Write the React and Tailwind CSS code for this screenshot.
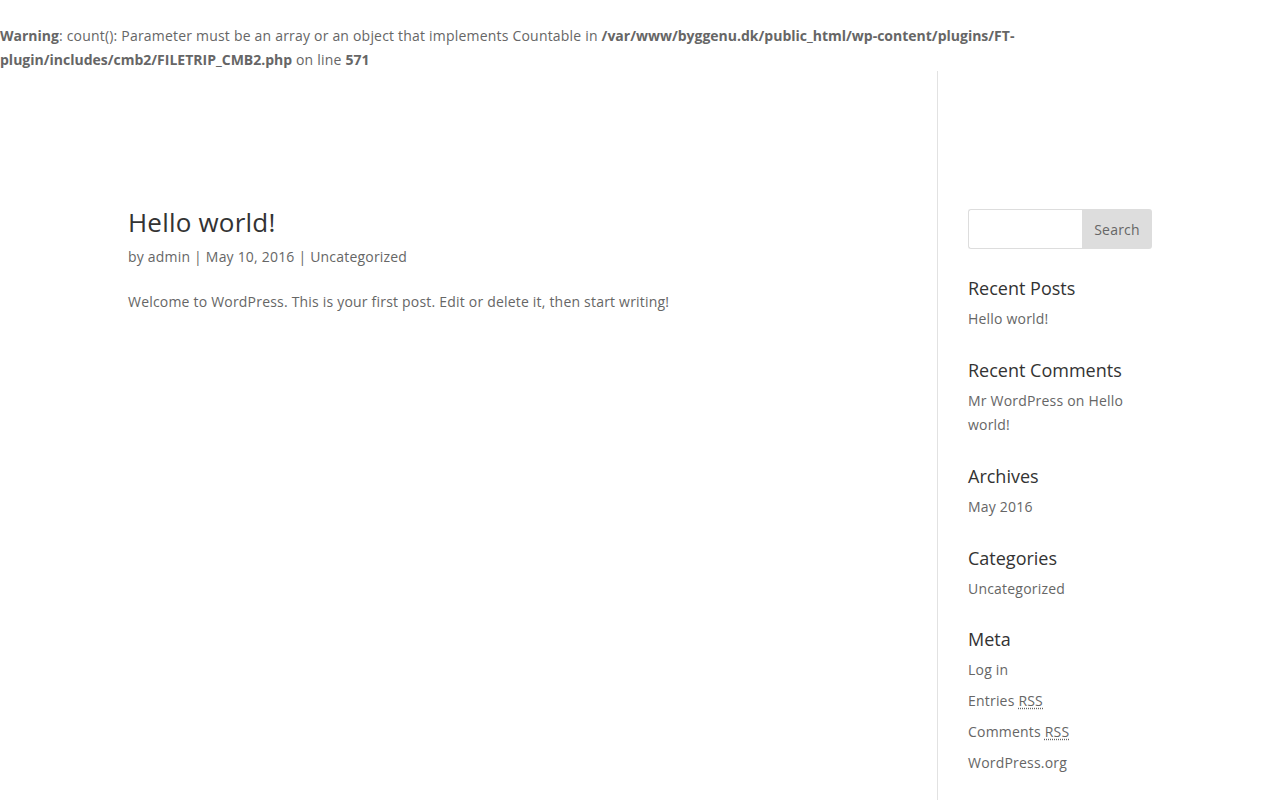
const font = { fontFamily: '"Open Sans", "Liberation Sans", sans-serif' };

const widgets = [
  { title: "Recent Posts", items: [<a key="1">Hello world!</a>] },
  {
    title: "Recent Comments",
    items: [
      <span key="1">
        <a>Mr WordPress</a> on <a>Hello world!</a>
      </span>,
    ],
  },
  { title: "Archives", items: [<a key="1">May 2016</a>] },
  { title: "Categories", items: [<a key="1">Uncategorized</a>] },
  {
    title: "Meta",
    items: [
      <a key="1">Log in</a>,
      <a key="2">
        Entries <abbr title="Really Simple Syndication">RSS</abbr>
      </a>,
      <a key="3">
        Comments <abbr title="Really Simple Syndication">RSS</abbr>
      </a>,
      <a key="4">WordPress.org</a>,
    ],
  },
];

const Sidebar = () => (
  <div className="w-[215px] shrink-0 border-l border-[#e2e2e2] pl-[30px] pt-[138px]">
    <div className="flex h-[40px] w-[184px]">
      <input
        type="text"
        className="h-[40px] w-[114px] rounded-l-[3px] border border-r-0 border-[#dddddd] bg-white px-2 outline-none"
      />
      <button className="h-[40px] w-[70px] rounded-r-[3px] bg-[#dddddd] text-[14px] tracking-[0.2px] text-[#666666]">
        Search
      </button>
    </div>
    {widgets.map((w) => (
      <div key={w.title} className={w.title === "Meta" ? "mt-[26px]" : "mt-[27px]"}>
        <h4 className="pb-[7px] text-[18px] leading-[24px] text-[#333333]">{w.title}</h4>
        <ul>
          {w.items.map((item, j) => (
            <li
              key={j}
              className="mb-[7px] text-[14px] leading-[24px] tracking-[0.2px] text-[#666666] last:mb-0"
            >
              {item}
            </li>
          ))}
        </ul>
      </div>
    ))}
  </div>
);

const Post = () => (
  <div className="w-[809px] shrink-0 pt-[138px]">
    <h1 className="text-[26px] leading-[26px] tracking-[0.2px] text-[#333333]">Hello world!</h1>
    <p className="mt-[10px] text-[14px] leading-[24px] tracking-[0.2px] text-[#666666]">
      by <a>admin</a> | <span>May 10, 2016</span> | <a>Uncategorized</a>
    </p>
    <p className="mt-[21px] text-[14px] leading-[24px] tracking-[0.2px] text-[#666666]">
      Welcome to WordPress. This is your first post. Edit or delete it, then start writing!
    </p>
  </div>
);

export default function App() {
  return (
    <div className="h-[800px] overflow-hidden bg-white" style={font}>
      <div className="text-[14px] leading-[1.7] tracking-[0.2px] text-[#666666]">
        <br />
        <b className="tracking-normal">Warning</b>: count(): Parameter must be an array or an object that
        implements Countable in{" "}
        <b className="tracking-normal">
          /var/www/byggenu.dk/public_html/wp-content/plugins/FT-plugin/includes/cmb2/FILETRIP_CMB2.php
        </b>{" "}
        on line <b className="tracking-normal">571</b>
      </div>
      <div className="mx-auto flex h-[729px] w-[1024px]">
        <Post />
        <Sidebar />
      </div>
    </div>
  );
}
